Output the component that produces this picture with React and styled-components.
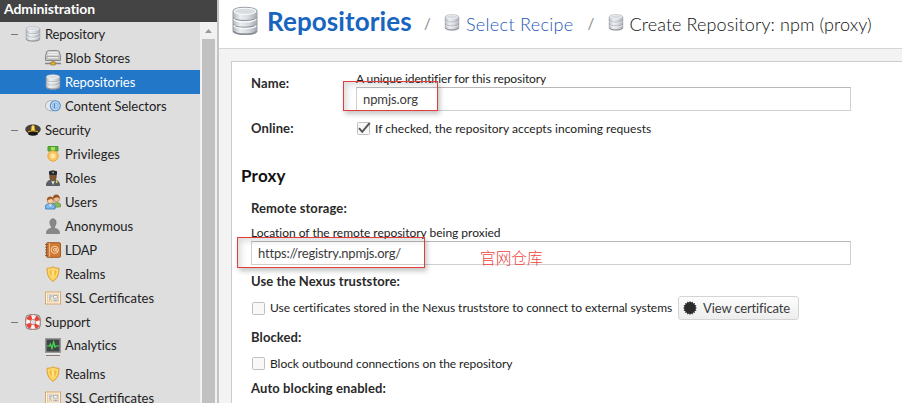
import React from "react";
import styled, { createGlobalStyle } from "styled-components";

const GlobalStyle = createGlobalStyle`
  *, *::before, *::after { box-sizing: border-box; }
  body { margin: 0; overflow: hidden; font-family: Lato, "Noto Sans CJK SC", sans-serif; color: #222; }
`;

const Page = styled.div`
  display: flex;
  width: 902px;
  height: 403px;
  overflow: hidden;
  background: #f3f3f3;
`;

/* Sidebar */
const Sidebar = styled.aside`
  display: flex;
  flex-direction: column;
  flex: none;
  width: 217px;
`;

const SidebarTitle = styled.div`
  flex: none;
  height: 22px;
  padding-left: 4px;
  background: #444;
  color: #fff;
  font-size: 14px;
  font-weight: 700;
  line-height: 18px;
  letter-spacing: -0.1px;
`;

const SidebarBody = styled.div`
  display: flex;
  flex: 1;
  min-height: 0;
`;

const Tree = styled.nav`
  flex: none;
  width: 200px;
  overflow: hidden;
  background: #dedede;
`;

const TreeRow = styled.div`
  display: flex;
  align-items: ${(p) => (p.$tall ? "flex-start" : "center")};
  height: ${(p) => (p.$tall ? 28 : 24)}px;
  padding-left: ${(p) => (p.$group ? 11 : 45)}px;
  padding-top: ${(p) => (p.$tall ? 4 : 0)}px;
  background: ${(p) => (p.$selected ? "#2277c8" : "transparent")};
  color: ${(p) => (p.$selected ? "#fff" : "#222")};
`;

const Collapse = styled.span`
  width: 7px;
  height: 1px;
  margin-right: 7px;
  background: #777;
`;

const TreeIcon = styled.svg`
  flex: none;
  width: 16px;
  height: ${(p) => (p.$tall ? 20 : 16)}px;
  margin-top: ${(p) => (p.$tall ? 0 : -1)}px;
  overflow: visible;
`;

const TreeLabel = styled.span`
  margin: -1px 0 0 4px;
  font-size: 13px;
  line-height: 16px;
  letter-spacing: ${(p) => p.$spacing || 0}px;
  white-space: nowrap;
`;

const Scrollbar = styled.div`
  display: flex;
  flex-direction: column;
  align-items: center;
  width: 17px;
  background: #f1f1f1;
`;

const ScrollUp = styled.svg`
  width: 17px;
  height: 17px;
`;

const ScrollThumb = styled.div`
  flex: 1;
  width: 13px;
  background: #c1c1c1;
`;

/* Main area */
const Main = styled.main`
  display: flex;
  flex-direction: column;
  flex: 1;
  min-width: 0;
  border-left: 2px solid #c4c4c4;
`;

const Breadcrumb = styled.header`
  display: flex;
  flex: none;
  height: 49px;
  padding-left: 12px;
  background: #fff;
  border-bottom: 1px solid #d4d4d4;
  white-space: nowrap;
`;

const TitleIcon = styled.svg`
  width: 28px;
  height: 30px;
  margin-top: 6px;
`;

const Title = styled.h1`
  width: 146px;
  margin: 3px 0 0 8px;
  color: #1765bf;
  font-size: 26px;
  font-weight: 700;
  line-height: 36px;
  letter-spacing: 0.1px;
`;

const Slash = styled.span`
  width: 7px;
  margin: 11px 13px 0 ${(p) => p.$gap}px;
  color: #888;
  font-size: 15px;
  line-height: 24px;
`;

const CrumbIcon = styled.svg`
  width: 16px;
  height: 17px;
  margin-top: 14px;
`;

const Crumb = styled.span`
  margin: 12px 0 0 6px;
  color: ${(p) => (p.$link ? "#2558b8" : "#111")};
  font-size: 18px;
  font-weight: 300;
  line-height: 24px;
  letter-spacing: ${(p) => p.$spacing}px;
`;

const Panel = styled.section`
  flex: 1;
  min-height: 0;
  margin: 12px 0 0 12px;
  padding: 10px 0 0 19px;
  overflow: hidden;
  background: #fff;
  border: solid #ccc;
  border-width: 1px 0 0 1px;
`;

const FieldRow = styled.div`
  display: flex;
  height: ${(p) => p.$height}px;
`;

const SideLabel = styled.div`
  width: 105px;
  padding-top: ${(p) => p.$top}px;
`;

const Label = styled.div`
  height: ${(p) => p.$height || 16}px;
  color: #2a2a2a;
  font-size: 13px;
  font-weight: 700;
  line-height: 16px;
  letter-spacing: ${(p) => p.$spacing || 0.1}px;
`;

const Hint = styled.div`
  height: ${(p) => p.$height}px;
  font-size: 12px;
  line-height: 14px;
  letter-spacing: ${(p) => p.$spacing}px;
  white-space: nowrap;
`;

const FieldBox = styled.div`
  position: relative;
  width: ${(p) => p.$width}px;
  height: 24px;
`;

const Input = styled.input`
  display: block;
  width: 100%;
  height: 24px;
  padding: 0 6px 0 6px;
  border: 1px solid #d0d0d0;
  border-top-color: #b8b8b8;
  border-radius: 0;
  outline: 0;
  background: #fff;
  color: #3c3c3c;
  font: 13px Lato, sans-serif;
  letter-spacing: ${(p) => p.$spacing}px;
`;

const Highlight = styled.div`
  position: absolute;
  left: ${(p) => p.$left}px;
  top: ${(p) => p.$top}px;
  width: ${(p) => p.$width}px;
  height: ${(p) => p.$height}px;
  border: 1px solid #e23c3c;
  box-shadow: 2px 3px 5px rgba(0, 0, 0, 0.24), inset 4px 4px 6px -1px rgba(0, 0, 0, 0.14);
`;

const Note = styled.span`
  position: absolute;
  left: 229px;
  top: 5px;
  color: #ee4440;
  font: 300 15.7px/24px "Noto Sans CJK SC", sans-serif;
  white-space: nowrap;
`;

const SectionTitle = styled.h2`
  height: 36px;
  margin: 0 0 0 -10px;
  color: #111;
  font-size: 17px;
  font-weight: 700;
  line-height: 24px;
  letter-spacing: 0.2px;
`;

const CheckRow = styled.label`
  display: flex;
  align-items: center;
  height: ${(p) => p.$height}px;
  padding-left: 1px;
  font-size: 12px;
  line-height: 14px;
  white-space: nowrap;
`;

const CheckBox = styled.svg`
  flex: none;
  width: 13px;
  height: 13px;
  overflow: visible;
`;

const CheckText = styled.span`
  margin-left: 5px;
  letter-spacing: ${(p) => p.$spacing}px;
`;

const Button = styled.button`
  display: flex;
  align-items: center;
  width: 121px;
  height: 24px;
  margin-left: 6px;
  padding: 0 0 1px 4px;
  border: 1px solid #d4d4d4;
  border-radius: 3px;
  background: linear-gradient(#fdfdfd, #ededed);
  color: #3a3a3a;
  font: 13px Lato, sans-serif;
  letter-spacing: -0.15px;
  white-space: nowrap;
`;

const SealIcon = styled.svg`
  width: 14px;
  height: 14px;
  margin-right: 6px;
`;

const CylinderShape = () => (
  <>
    <defs>
      <linearGradient id="steel" x1="0" x2="1" y1="0" y2="0">
        <stop offset="0" stopColor="#b4b8be" />
        <stop offset=".3" stopColor="#eceef0" />
        <stop offset=".65" stopColor="#d5d8dc" />
        <stop offset="1" stopColor="#a6aab1" />
      </linearGradient>
    </defs>
    <path d="M1.200 3.200C1.200 0 14.800 0 14.800 3.200v11.600c0 3-13.600 3-13.600 0z" fill="url(#steel)" stroke="#9da1a8" strokeWidth=".7" />
    <ellipse cx="8" cy="3.200" rx="6.200" ry="1.900" fill="#d9dce0" stroke="#f7f8f9" strokeWidth=".6" />
    <path d="M1.400 6.800c0 2.600 13.200 2.600 13.200 0M1.400 10.800c0 2.600 13.200 2.600 13.200 0" fill="none" stroke="#9196a0" strokeWidth=".7" />
    <path d="M1.700 7.600c0 2.600 12.600 2.600 12.600 0M1.700 11.600c0 2.600 12.600 2.600 12.600 0" fill="none" stroke="#fbfbfc" strokeWidth=".7" />
    <path d="M1.500 15c.8 2.500 12.200 2.500 13 0" fill="none" stroke="#868b94" strokeWidth=".9" />
  </>
);

const shieldPath = "M8 .8c2 1.300 4 1.500 6 1.400 0 6-1.200 10-6 13.200C3.200 12.200 2 8.200 2 2.200 4 2.300 6 2.100 8 .8z";

const icons = {
  database: (
    <svg viewBox="0 0 16 18" width="16" height="16" preserveAspectRatio="none">
      <CylinderShape />
    </svg>
  ),
  blob: (
    <>
      <path d="M3.500.6h9c1 0 1.700.6 1.900 1.400l1.100 4v4.500H.5V6l1.100-4C1.800 1.200 2.500.6 3.500.6z" fill="#cfcfcf" stroke="#8a8a8a" />
      <path d="M3.500 2.500h9M3 4.500h10" stroke="#f4f4f4" />
      <path d="M2 6.500h12v2.500H2z" fill="#ececec" stroke="#949494" strokeWidth=".7" />
      <path d="M8 10.500v3M0 13.500h16" stroke="#858585" strokeWidth="1.300" />
      <path d="M5.800 12h4.400v3H5.800z" fill="#ecb52c" stroke="#8a6a1d" strokeWidth=".6" />
    </>
  ),
  selectors: (
    <>
      <rect x=".5" y="2.800" width="12" height="10" rx="5" fill="#e6e9ec" stroke="#a5a9ad" strokeWidth=".9" />
      <circle cx="10.300" cy="7.800" r="5" fill="#cde0f3" stroke="#4f8fd2" strokeWidth="1.100" />
      <circle cx="10.300" cy="7.800" r="3" fill="#b4d0ee" stroke="#7cabdf" strokeWidth=".8" />
      <path d="M9.500 5.600v4.400" stroke="#4d84c8" />
    </>
  ),
  security: (
    <>
      <path d="M.3 7.500C.3 4.300 4 2.500 8 2.500s7.700 1.800 7.700 5c0 1.500-1.200 2.800-2.700 3.500H3C1.500 10.300.3 9 .3 7.500z" fill="#45403c" />
      <path d="M2.500 9.500c3-1.800 8-1.800 11 0l-1 3.300c-3 1.400-6 1.400-9 0z" fill="#171717" />
      <path d="M3 9.300c3-1.500 7-1.500 10 0v1.300c-3-1.500-7-1.500-10 0z" fill="#dba52a" />
      <path d="M8 2.800l1.500 1.700.5 4.200H6l.5-4.200z" fill="#ffdf5a" stroke="#bf8618" strokeWidth=".6" />
    </>
  ),
  medal: (
    <>
      <path d="M3 .5h10v4.500H3z" fill="#5caf32" stroke="#4a9a2a" />
      <path d="M6 1h4v3.500H6z" fill="#a5dd6d" />
      <circle cx="8" cy="10" r="5.200" fill="#f7c864" stroke="#eaa541" />
      <circle cx="8" cy="10" r="3.200" fill="#ffe6a0" stroke="#f0b34a" strokeWidth=".7" />
    </>
  ),
  role: (
    <>
      <path d="M1.500 15.500c0-4 2-5 4.500-5.500h4c2.500.5 4.500 1.500 4.500 5.500z" fill="#5b6067" stroke="#3c3f44" strokeWidth=".7" />
      <path d="M6 10l2 5 2-5z" fill="#eee" />
      <path d="M4.800 4h6.400v3.300c0 2-1.600 3.700-3.200 3.700s-3.200-1.700-3.200-3.700z" fill="#83572f" stroke="#4d331e" strokeWidth=".6" />
      <path d="M4 1.300 8 .3l4 1v2.500l-.7 1.300H4.700L4 3.800z" fill="#252b3a" />
      <path d="M7.500 1.700h1.200v1.500H7.500zM11.500 10l1.200 1.500-.8 2-1.200-1.500z" fill="#f4da34" />
    </>
  ),
  users: (
    <>
      <path d="M8 13.500V9.800C9 8.500 14 8 15.500 10v2.800z" fill="#8db85a" stroke="#5a8a38" strokeWidth=".7" />
      <circle cx="11.500" cy="4.700" r="3" fill="#f1c194" stroke="#a36738" strokeWidth=".6" />
      <path d="M8 4.500C7.500-.8 15-.8 14.800 4.500l-2.300-1.200z" fill="#945323" />
      <path d="M.6 15v-3.500c1-2.500 8.300-2.500 9.400 0V15z" fill="#7db7ee" stroke="#2f78b8" strokeWidth=".8" />
      <path d="M3.800 10.500l1.500 2 1.500-2z" fill="#fff" />
      <circle cx="5.300" cy="6.800" r="3" fill="#f8cba0" stroke="#a36738" strokeWidth=".6" />
      <path d="M1.900 6.500C1.200 1 9.300 1 8.700 6.500L6.500 4.800z" fill="#a35c26" />
    </>
  ),
  anonymous: (
    <path d="M4.900 4.300C4.900-.3 11.100-.3 11.100 4.300c0 2-.7 3.500-1.500 4.300v1.600c3 .8 4.900 1.500 4.900 5.300h-13c0-3.800 1.900-4.500 4.900-5.300V8.600c-.8-.8-1.500-2.300-1.500-4.300z" fill="#878787" stroke="#747474" strokeWidth=".7" />
  ),
  ldap: (
    <>
      <rect x="1.500" y=".7" width="14" height="14.600" rx="1" fill="#d07a35" stroke="#a05a28" />
      <path d="M4.500 1.200v13.600" stroke="#f2b885" />
      <circle cx="9.800" cy="7.800" r="3.600" fill="none" stroke="#ffe2bc" strokeWidth=".9" />
      <circle cx="9.800" cy="7.800" r="1.300" fill="none" stroke="#ffe2bc" strokeWidth=".9" />
      <path d="M11.300 6v2.700c0 1 1.500 1 1.800 0" fill="none" stroke="#ffe2bc" strokeWidth=".8" />
      <path d="M0 2.500h3M0 5.200h3M0 8h3M0 10.800h3M0 13.500h3" stroke="#865233" strokeWidth=".8" />
    </>
  ),
  shield: (
    <>
      <path d={shieldPath} fill="#f8c94f" stroke="#dfa03a" />
      <path d="M8 2.500c1.500.8 2.900 1 4.400 1C12.300 8 11.300 11 8 13.500 4.700 11 3.700 8 3.600 3.500c1.500 0 2.900-.2 4.400-1z" fill="none" stroke="#ffe38a" strokeWidth=".8" />
      <path d="M8 3.500v8" stroke="#fff0a8" strokeWidth="1.200" />
      <path d="M5.700 5v3.500M10.300 5v3.500" stroke="#f3b23a" />
    </>
  ),
  certificate: (
    <>
      <rect x=".5" y="2" width="15" height="12" fill="#fff5e3" stroke="#dba56e" />
      <rect x="2.500" y="4" width="11" height="8" fill="#efe8da" stroke="#d5b98e" strokeWidth=".6" />
      <path d="M4 6h3.500M4 8h2M8.500 10.300h4" stroke="#8796b5" strokeWidth=".9" />
      <rect x="8.700" y="5.500" width="3.500" height="2.600" fill="#fff" stroke="#9c9a93" strokeWidth=".7" />
      <path d="M4 10.500l1.500-1 1.500 1" fill="none" stroke="#e9ab51" />
    </>
  ),
  lifebuoy: (
    <>
      <rect x=".7" y=".7" width="14.600" height="14.600" rx="4" fill="#c9c9c9" stroke="#858585" />
      <circle cx="8" cy="8" r="5" fill="none" stroke="#f8f5f3" strokeWidth="4.500" />
      <circle cx="8" cy="8" r="5" fill="none" stroke="#ee4034" strokeWidth="4.500" strokeDasharray="4.300 3.554" strokeDashoffset="2.150" transform="rotate(45 8 8)" />
      <circle cx="8" cy="8" r="2.700" fill="#dedede" stroke="#a64b45" strokeWidth=".5" />
      <circle cx="8" cy="8" r="7.200" fill="none" stroke="#c25a52" strokeWidth=".5" />
    </>
  ),
  analytics: (
    <>
      <rect x=".75" y=".75" width="14.500" height="13.500" fill="#3f4643" stroke="#989898" strokeWidth="1.500" />
      <path d="M2 8h2.500l1-2 1.500 4.500L8.700 4 10 9l1-1h3" fill="none" stroke="#45e052" strokeWidth="1.200" />
      <path d="M.5 15.500h15" stroke="#eee" />
      <path d="M1 17.500h14" stroke="#8d7f77" />
    </>
  ),
};

const treeItems = [
  { label: "Repository", icon: "database", group: true, spacing: -0.14 },
  { label: "Blob Stores", icon: "blob" },
  { label: "Repositories", icon: "database", selected: true },
  { label: "Content Selectors", icon: "selectors", spacing: -0.03 },
  { label: "Security", icon: "security", group: true, spacing: -0.12 },
  { label: "Privileges", icon: "medal", spacing: 0.06 },
  { label: "Roles", icon: "role", spacing: 0.1 },
  { label: "Users", icon: "users", spacing: 0.05 },
  { label: "Anonymous", icon: "anonymous" },
  { label: "LDAP", icon: "ldap", spacing: -0.3 },
  { label: "Realms", icon: "shield" },
  { label: "SSL Certificates", icon: "certificate" },
  { label: "Support", icon: "lifebuoy", group: true },
  { label: "Analytics", icon: "analytics", tall: true, spacing: -0.03 },
  { label: "Realms", icon: "shield" },
  { label: "SSL Certificates", icon: "certificate" },
];

const Check = ({ checked }) => (
  <CheckBox viewBox="0 0 13 13">
    <rect x=".5" y=".5" width="12" height="12" rx="1" fill="#f8f8f8" stroke="#c0c0c0" />
    {checked && <path d="M2 6.200l3.200 3.600L12.800.8" fill="none" stroke="#555" strokeWidth="2" />}
  </CheckBox>
);

const sealPoints = Array.from({ length: 32 }, (_, i) => {
  const r = i % 2 ? 5.500 : 7;
  const a = (i * Math.PI) / 16;
  return `${(7 + r * Math.sin(a)).toFixed(2)},${(7 - r * Math.cos(a)).toFixed(2)}`;
}).join(" ");

export default function App() {
  return (
    <Page>
      <GlobalStyle />
      <Sidebar>
        <SidebarTitle>Administration</SidebarTitle>
        <SidebarBody>
          <Tree>
            {treeItems.map((item, i) => (
              <TreeRow key={i} $group={item.group} $selected={item.selected} $tall={item.tall}>
                {item.group && <Collapse />}
                <TreeIcon viewBox={item.tall ? "0 0 16 20" : "0 0 16 16"} $tall={item.tall}>
                  {icons[item.icon]}
                </TreeIcon>
                <TreeLabel $spacing={item.spacing}>{item.label}</TreeLabel>
              </TreeRow>
            ))}
          </Tree>
          <Scrollbar>
            <ScrollUp viewBox="0 0 17 17">
              <path d="M5 11l3.500-4 3.500 4z" fill="#999" />
            </ScrollUp>
            <ScrollThumb />
          </Scrollbar>
        </SidebarBody>
      </Sidebar>
      <Main>
        <Breadcrumb>
          <TitleIcon viewBox="0 0 16 18" preserveAspectRatio="none"><CylinderShape /></TitleIcon>
          <Title>Repositories</Title>
          <Slash $gap={11}>/</Slash>
          <CrumbIcon viewBox="0 0 16 18" preserveAspectRatio="none"><CylinderShape /></CrumbIcon>
          <Crumb $link $spacing={0.32}>Select Recipe</Crumb>
          <Slash $gap={14}>/</Slash>
          <CrumbIcon viewBox="0 0 16 18" preserveAspectRatio="none"><CylinderShape /></CrumbIcon>
          <Crumb $spacing={0.1}>Create Repository: npm (proxy)</Crumb>
        </Breadcrumb>
        <Panel>
          <FieldRow $height={44}>
            <SideLabel $top={3}><Label>Name:</Label></SideLabel>
            <div>
              <Hint $height={15} $spacing={-0.1}>A unique identifier for this repository</Hint>
              <FieldBox $width={495}>
                <Input $spacing={-0.1} defaultValue="npmjs.org" />
                <Highlight $left={-13} $top={-6} $width={95} $height={30} />
              </FieldBox>
            </div>
          </FieldRow>
          <FieldRow $height={48}>
            <SideLabel $top={4}><Label>Online:</Label></SideLabel>
            <CheckRow $height={25}>
              <Check checked />
              <CheckText $spacing={0.03}>If checked, the repository accepts incoming requests</CheckText>
            </CheckRow>
          </FieldRow>
          <SectionTitle>Proxy</SectionTitle>
          <Label $height={26} $spacing={0.1}>Remote storage:</Label>
          <Hint $height={15} $spacing={-0.02}>Location of the remote repository being proxied</Hint>
          <FieldBox $width={600}>
            <Input $spacing={-0.2} defaultValue="https://registry.npmjs.org/" />
            <Highlight $left={-14} $top={-4} $width={188} $height={31} />
            <Note>官网仓库</Note>
          </FieldBox>
          <FieldRow $height={8} />
          <Label $height={23} $spacing={0.05}>Use the Nexus truststore:</Label>
          <CheckRow $height={24}>
            <Check />
            <CheckText $spacing={-0.05}>Use certificates stored in the Nexus truststore to connect to external systems</CheckText>
            <Button>
              <SealIcon viewBox="0 0 14 14"><polygon points={sealPoints} fill="#2b2b2b" /></SealIcon>
              View certificate
            </Button>
          </CheckRow>
          <FieldRow $height={9} />
          <Label $height={22}>Blocked:</Label>
          <CheckRow $height={25}>
            <Check />
            <CheckText $spacing={-0.04}>Block outbound connections on the repository</CheckText>
          </CheckRow>
          <FieldRow $height={4} />
          <Label>Auto blocking enabled:</Label>
        </Panel>
      </Main>
    </Page>
  );
}
